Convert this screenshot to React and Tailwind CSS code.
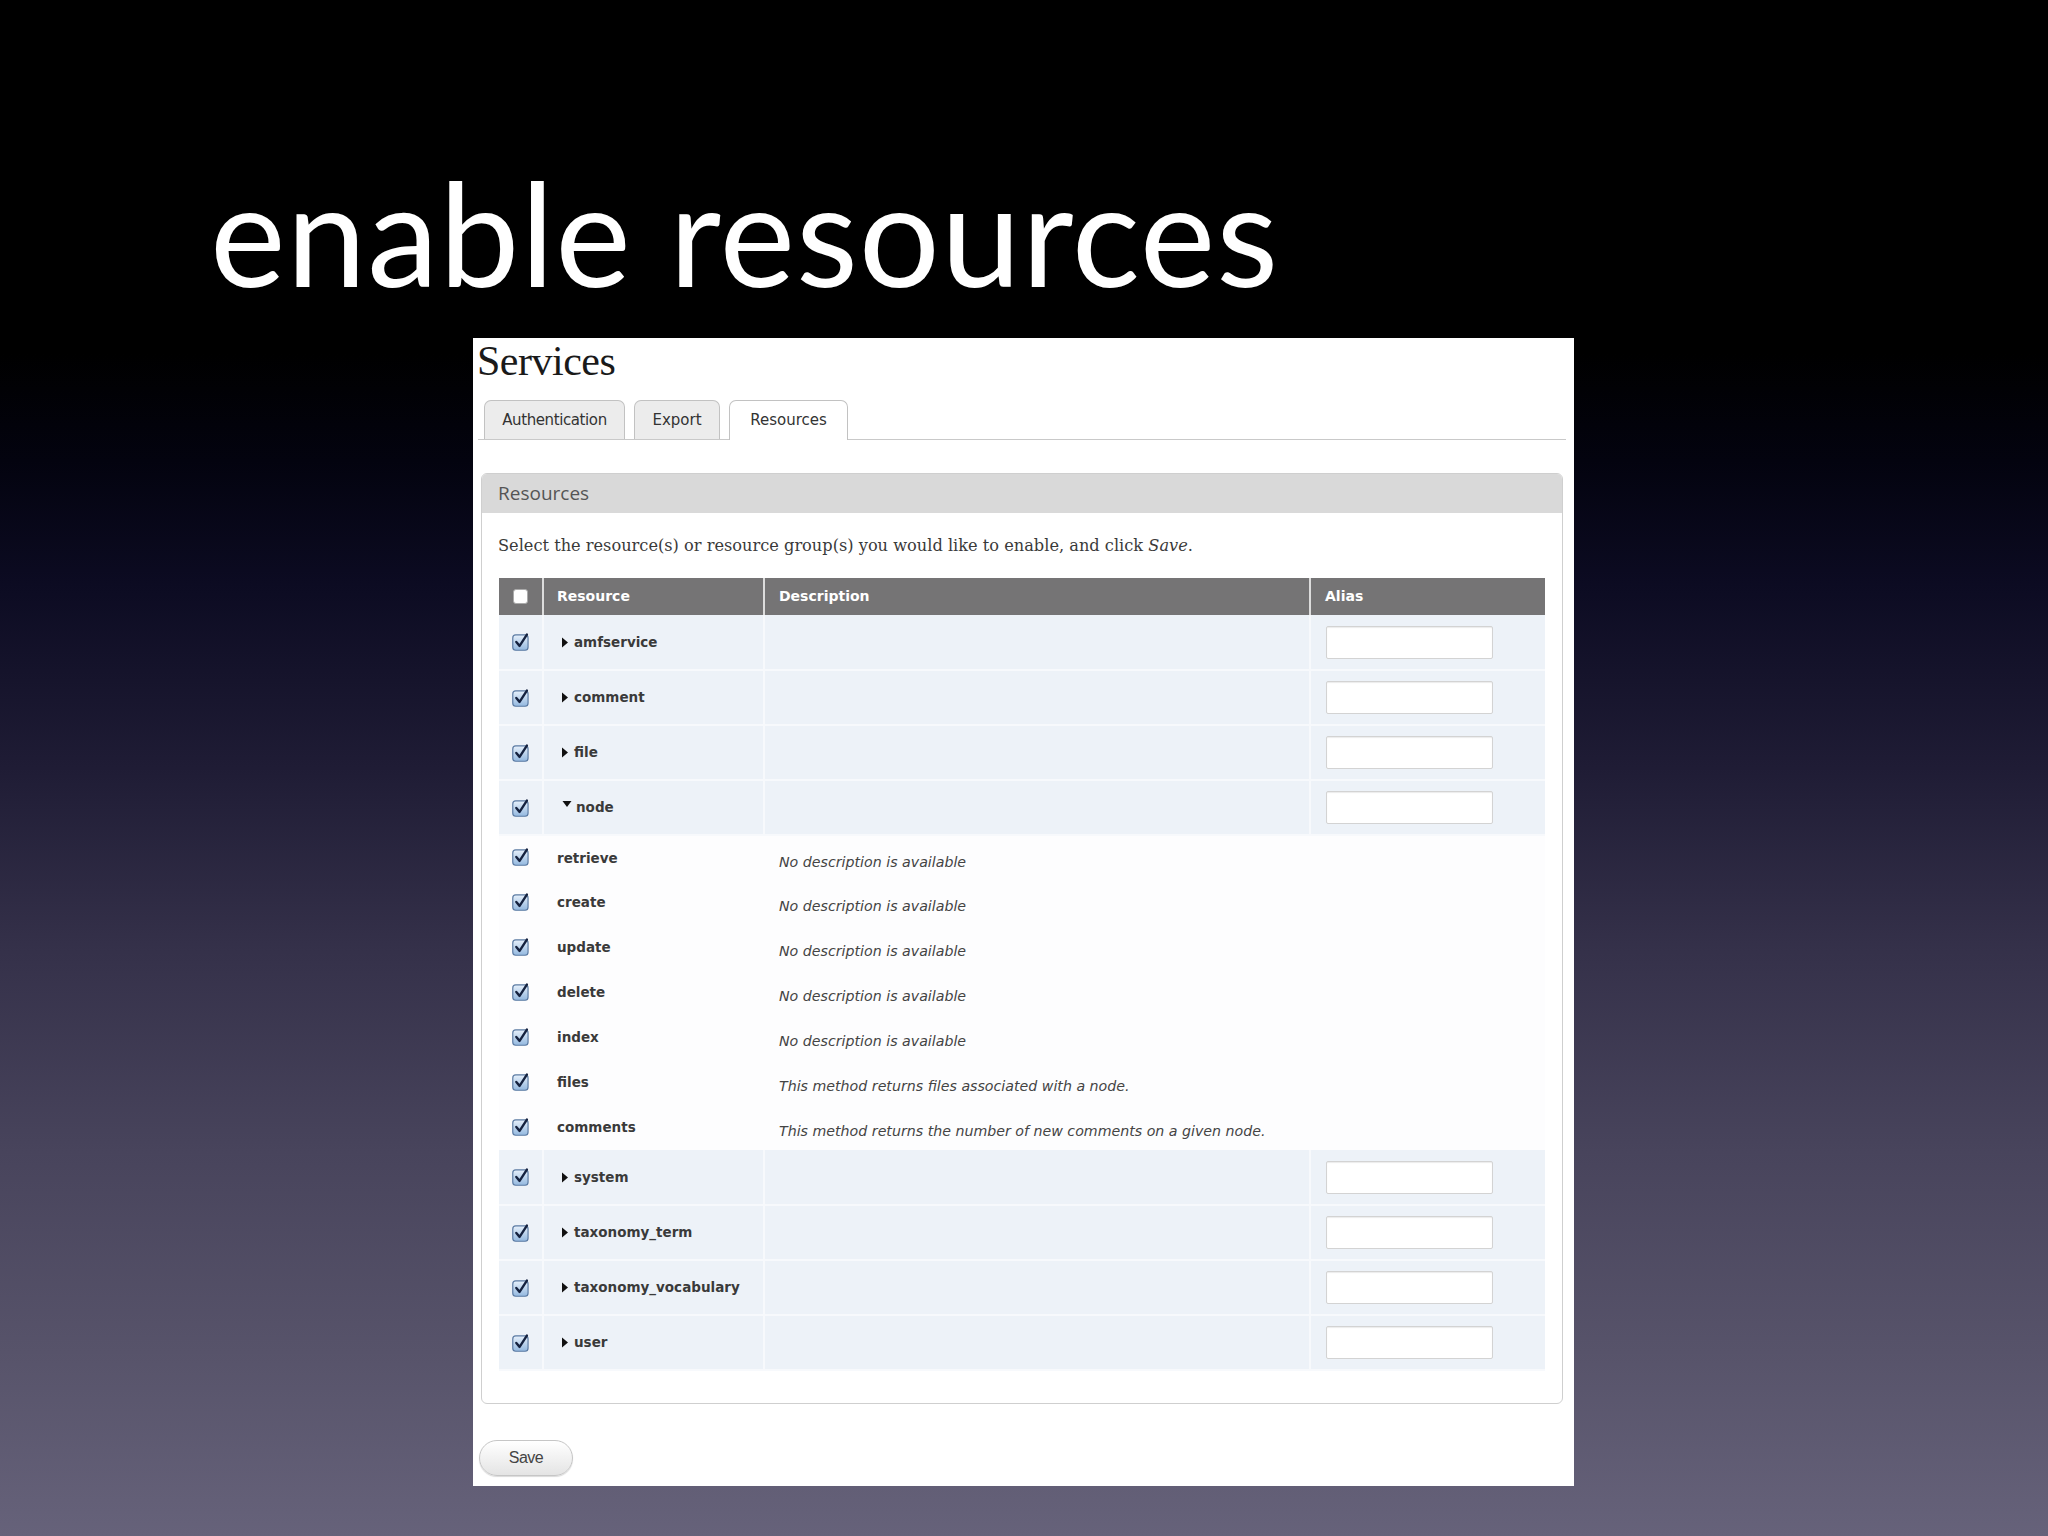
import React from "react";

const groups = [
  { name: "amfservice" },
  { name: "comment" },
  { name: "file" },
  {
    name: "node",
    open: true,
    methods: [
      ["retrieve", "No description is available"],
      ["create", "No description is available"],
      ["update", "No description is available"],
      ["delete", "No description is available"],
      ["index", "No description is available"],
      ["files", "This method returns files associated with a node."],
      ["comments", "This method returns the number of new comments on a given node."],
    ],
  },
  { name: "system" },
  { name: "taxonomy_term" },
  { name: "taxonomy_vocabulary" },
  { name: "user" },
];

// mac style checked box
function CheckBox() {
  return (
    <svg width="20" height="20" viewBox="0 0 17 17" className="block">
      <defs>
        <linearGradient id="cb" x1="0" y1="0" x2="0" y2="1">
          <stop offset="0" stopColor="#e6f0fb" />
          <stop offset="1" stopColor="#93b8df" />
        </linearGradient>
      </defs>
      <rect x="1.5" y="2.5" width="13" height="13" rx="2.5" fill="url(#cb)" stroke="#5b7ba3" strokeWidth="1" />
      <path d="M4.5 8.5 L7.3 11.8 L13.5 2.2" fill="none" stroke="#15223f" strokeWidth="2" strokeLinecap="round" strokeLinejoin="round" />
    </svg>
  );
}

function Arrow({ open }) {
  return open ? (
    <svg width="10" height="7" viewBox="0 0 9 7" className="mr-[4px] -mt-[7px]">
      <polygon points="0,0 9,0 4.5,6" fill="#111" />
    </svg>
  ) : (
    <svg width="7" height="11" viewBox="0 0 7 10" className="mr-[5px]">
      <polygon points="0,0 6,5 0,10" fill="#111" />
    </svg>
  );
}

function GroupRow({ name, open }) {
  return (
    <tr className="h-[55px] bg-[#edf2f8] border-b-2 border-[#f7f9fc]">
      <td className="border-r-2 border-[#f7f9fc]">
        <div className="flex justify-center">
          <CheckBox />
        </div>
      </td>
      <td className="border-r-2 border-[#f7f9fc] pl-[18px]">
        <div className="flex items-center font-bold text-[13.5px] text-[#3a3a3a]">
          <Arrow open={open} />
          {name}
        </div>
      </td>
      <td className="border-r-2 border-[#f7f9fc]"></td>
      <td className="pl-[15px]">
        <input
          type="text"
          className="block w-[167px] h-[33px] bg-white border border-[#d3d3d3] rounded-[2px] shadow-[inset_0_1px_1px_rgba(0,0,0,0.08)]"
        />
      </td>
    </tr>
  );
}

function MethodRow({ name, desc }) {
  return (
    <tr className="h-[45px] bg-[#fdfdfe]">
      <td>
        <div className="flex justify-center -mt-[2px]">
          <CheckBox />
        </div>
      </td>
      <td className="pl-[14px]">
        <div className="font-bold text-[13.5px] text-[#3a3a3a]">{name}</div>
      </td>
      <td className="pl-[15px]" colSpan={2}>
        <div className="italic text-[14.2px] text-[#444] pt-[9px]">{desc}</div>
      </td>
    </tr>
  );
}

export default function App() {
  return (
    <div className="min-h-[1536px] w-[2048px] overflow-hidden bg-[linear-gradient(to_bottom,#000_0%,#000_23%,#03030f_30%,#0c0b22_38%,#1f1c35_50%,#35314a_62%,#48445c_75%,#57536a_88%,#66627a_100%)]">
      {/* Slide title */}
      <h1 className="pt-[160px] pl-[210px] text-[143px] leading-none tracking-[1px] text-white font-['Lato',sans-serif]">
        enable resources
      </h1>

      {/* Screenshot panel */}
      <div className="mt-[35px] ml-[473px] w-[1101px] bg-white pt-[2px] pb-[10px] pl-[8px] pr-[11px]">
        <h2 className="-ml-[4px] text-[42px] leading-none text-[#1a1a1a] font-['Liberation_Serif',serif] tracking-[-0.5px]">
          Services
        </h2>

        {/* Tabs */}
        <div className="mt-[18px] -ml-[3px] -mr-[3px] flex items-end gap-[9px] pl-[6px] border-b border-[#c9c9c9] h-[40px] font-['DejaVu_Sans',sans-serif] text-[15px] text-[#333]">
          <div className="h-[39px] w-[141px] flex items-center justify-center bg-[#ececec] border border-b-0 border-[#c2c2c2] rounded-t-[7px] tracking-[-0.4px]">
            Authentication
          </div>
          <div className="h-[39px] w-[86px] flex items-center justify-center bg-[#ececec] border border-b-0 border-[#c2c2c2] rounded-t-[7px]">
            Export
          </div>
          <div className="h-[40px] -mb-px w-[119px] flex items-center justify-center bg-white border border-b-0 border-[#c2c2c2] rounded-t-[7px]">
            Resources
          </div>
        </div>

        {/* Fieldset */}
        <div className="mt-[33px] border border-[#cfcfcf] rounded-[6px] pb-[32px]">
          <div className="h-[39px] bg-[#d9d9d9] rounded-t-[5px] flex items-center pl-[16px] text-[19px] text-[#555] font-['Open_Sans',sans-serif]">
            Resources
          </div>
          <p className="mt-[21px] pl-[16px] text-[16.2px] leading-[24px] text-[#3a3a3a] font-['DejaVu_Serif',serif]">
            Select the resource(s) or resource group(s) you would like to enable, and click <em>Save</em>.
          </p>

          <table className="mt-[20px] ml-[17px] w-[1046px] table-fixed border-collapse font-['DejaVu_Sans',sans-serif]">
            <colgroup>
              <col className="w-[44px]" />
              <col className="w-[221px]" />
              <col className="w-[546px]" />
              <col className="w-[235px]" />
            </colgroup>
            <thead>
              <tr className="h-[37px] bg-[#757475] text-white text-[14px] font-bold text-left">
                <th className="border-r-2 border-[#dcdcdc]">
                  <div className="mx-auto w-[15px] h-[15px] rounded-[3px] bg-white border border-[#aaa]"></div>
                </th>
                <th className="border-r-2 border-[#dcdcdc] pl-[13px]">Resource</th>
                <th className="border-r-2 border-[#dcdcdc] pl-[14px]">Description</th>
                <th className="pl-[14px]">Alias</th>
              </tr>
            </thead>
            <tbody>
              {groups.map((g) => (
                <React.Fragment key={g.name}>
                  <GroupRow name={g.name} open={g.open} />
                  {g.methods &&
                    g.methods.map(([m, d]) => <MethodRow key={m} name={m} desc={d} />)}
                </React.Fragment>
              ))}
            </tbody>
          </table>
        </div>

        {/* Save */}
        <button className="mt-[36px] -ml-[2px] w-[94px] h-[36px] rounded-full border border-[#c6c6c6] bg-[linear-gradient(to_bottom,#ffffff,#e4e4e4)] shadow-[0_1px_1px_rgba(0,0,0,0.15)] text-[16px] text-[#444] font-['Liberation_Sans',sans-serif] tracking-[-0.5px]">
          Save
        </button>
      </div>
    </div>
  );
}
